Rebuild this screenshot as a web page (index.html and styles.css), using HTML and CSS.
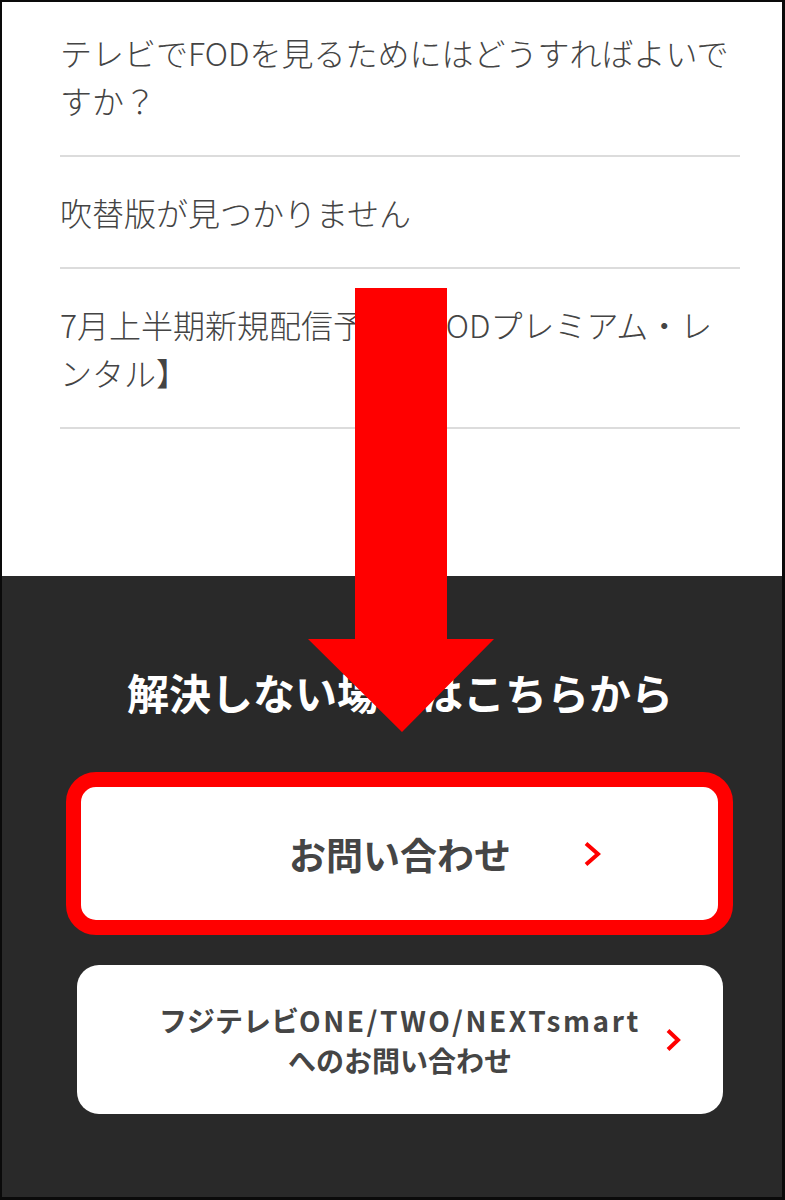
FILE: index.html
```html
<!DOCTYPE html>
<html lang="ja">
<head>
  <meta charset="UTF-8" />
  <meta name="viewport" content="width=device-width, initial-scale=1" />
  <title>よくある質問 - FOD</title>
  <link rel="stylesheet" href="styles.css">
</head>
<body>
  <div class="frame">
    <section class="faq">
      <ul class="faq-list">
        <li class="faq-item">テレビでFODを見るためにはどうすればよいですか？</li>
        <li class="faq-item">吹替版が見つかりません</li>
        <li class="faq-item">7月上半期新規配信予定【FODプレミアム・レンタル】</li>
      </ul>
    </section>

    <section class="contact">
      <h2>解決しない場合はこちらから</h2>
      <a class="contact-btn main" href="#">
        <span class="label">お問い合わせ</span>
        <svg class="chev" width="18" height="27" viewBox="0 0 18 27"><polyline points="3,3 15,13.5 3,24" /></svg>
      </a>
      <a class="contact-btn sub" href="#">
        <span class="label">フジテレビ<span class="latin">ONE/TWO/NEXTsmart</span><br>へのお問い合わせ</span>
        <svg class="chev" width="16" height="25" viewBox="0 0 16 25"><polyline points="3,3 13,12.5 3,22" /></svg>
      </a>
    </section>
  </div>

  <!-- annotation drawn over the screenshot -->
  <svg class="mark-arrow" width="186" height="444" viewBox="0 0 186 444">
    <polygon points="47,0 139,0 139,351 186,351 94,444 0,351 47,351" />
  </svg>
  <div class="mark-box"></div>
</body>
</html>
```

FILE: styles.css
```css
body {
  margin: 0;
  font-family: "Noto Sans CJK JP", "Noto Sans", sans-serif;
  background: #0a0a0a;
}

.frame {
  height: 1195px;
  border-style: solid;
  border-color: #0a0a0a;
  border-width: 2px 3px 3px 2px;
  display: flex;
  flex-direction: column;
}

.faq {
  background: #fff;
  height: 574px;
  padding: 0 42px 0 58px;
}

.faq-list {
  list-style: none;
  margin: 0;
  padding: 0;
}

.faq-item {
  font-size: 32px;
  line-height: 48px;
  font-weight: 300;
  color: #444;
  padding: 31px 0;
  border-bottom: 2px solid #dcdcdc;
}

.faq-item:first-child {
  padding-top: 26px;
}

.contact {
  flex: 1;
  background: #292929;
  padding: 86px 42px 0 58px;
}

.contact h2 {
  margin: 0 0 59px;
  color: #fff;
  font-size: 42px;
  line-height: 59px;
  font-weight: 700;
  text-align: center;
}

.contact-btn {
  position: relative;
  display: flex;
  align-items: center;
  justify-content: center;
  margin: 0 17px;
  background: #fff;
  border-radius: 22px;
  color: #454545;
  font-weight: 700;
  text-decoration: none;
  text-align: center;
}

.contact-btn.main {
  height: 148px;
  font-size: 37px;
}

.contact-btn.sub {
  height: 149px;
  margin-top: 37px;
  font-size: 28px;
  line-height: 40px;
}

.contact-btn .latin {
  letter-spacing: 2.6px;
}

.contact-btn .chev {
  position: absolute;
  top: 50%;
  transform: translateY(-50%);
  fill: none;
  stroke: #f00;
  stroke-width: 4;
}

.contact-btn.main .chev {
  right: 122px;
}

.contact-btn.sub .chev {
  right: 42px;
}

.mark-arrow {
  position: absolute;
  left: 308px;
  top: 288px;
  fill: #f00;
}

.mark-box {
  position: absolute;
  left: 66px;
  top: 772px;
  width: 637px;
  height: 133px;
  border: 15px solid #f00;
  border-radius: 30px;
}
```
